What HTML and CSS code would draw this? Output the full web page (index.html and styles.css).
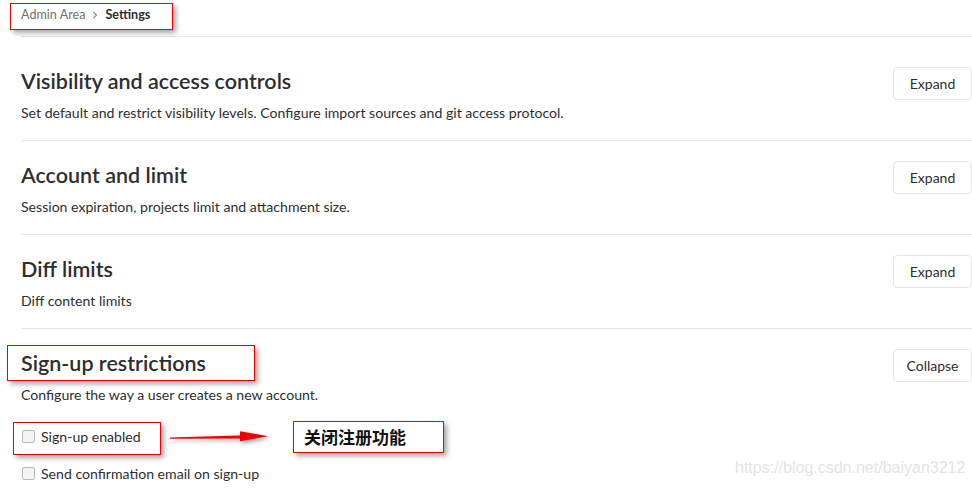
FILE: index.html
```html
<!DOCTYPE html>
<html lang="en">
<head>
    <meta charset="UTF-8">
    <title>Settings · Admin Area</title>
    <link rel="stylesheet" href="styles.css">
</head>
<body>
    <div class="page">
        <div class="breadcrumbs">
            <span class="crumb">Admin Area</span>
            <svg class="crumb-sep" width="6" height="8" viewBox="0 0 6 8">
                <path d="M1.5 1l3 3-3 3" fill="none" stroke="#8c8c8c" stroke-width="1.2"/>
            </svg>
            <span class="crumb-current">Settings</span>
        </div>

        <section class="block first">
            <div class="block-head">
                <div class="block-text">
                    <h4>Visibility and access controls</h4>
                    <p>Set default and restrict visibility levels. Configure import sources and git access protocol.</p>
                </div>
                <button class="btn">Expand</button>
            </div>
        </section>

        <section class="block">
            <div class="block-head">
                <div class="block-text">
                    <h4>Account and limit</h4>
                    <p>Session expiration, projects limit and attachment size.</p>
                </div>
                <button class="btn">Expand</button>
            </div>
        </section>

        <section class="block">
            <div class="block-head">
                <div class="block-text">
                    <h4>Diff limits</h4>
                    <p>Diff content limits</p>
                </div>
                <button class="btn">Expand</button>
            </div>
        </section>

        <section class="block last">
            <div class="block-head">
                <div class="block-text">
                    <h4>Sign-up restrictions</h4>
                    <p>Configure the way a user creates a new account.</p>
                </div>
                <button class="btn">Collapse</button>
            </div>
            <div class="checks">
                <label class="check"><input type="checkbox"> Sign-up enabled</label>
                <label class="check"><input type="checkbox"> Send confirmation email on sign-up</label>
            </div>
        </section>
    </div>

    <!-- annotations drawn over the screenshot -->
    <div class="mark mark-crumb"></div>
    <div class="mark mark-title"></div>
    <div class="mark mark-check"></div>
    <svg class="arrow" width="104" height="16" viewBox="0 0 104 16">
        <polygon points="0,8.4 70,6.6 70,2.2 98,7.2 70,12.2 70,9.6 0,9.8" fill="#ee0000"/>
    </svg>
    <div class="note">关闭注册功能</div>
    <div class="watermark">https://blog.csdn.net/baiyan3212</div>
</body>
</html>
```

FILE: styles.css
```css
body {
    margin: 0;
    font-family: Lato, "Noto Sans", sans-serif;
    color: #2e2e2e;
    background: #fff;
    overflow: hidden;
}
.page {
    padding-left: 21px;
}
.breadcrumbs {
    display: flex;
    align-items: flex-start;
    box-sizing: border-box;
    height: 37px;
    padding-top: 6px;
    border-bottom: 1px solid #e5e5e5;
    font-size: 12.6px;
    line-height: 18px;
}
.crumb {
    color: #707070;
}
.crumb-sep {
    margin: 5px 7px 0 7px;
}
.crumb-current {
    font-weight: 700;
}
.block {
    border-top: 1px solid #e5e5e5;
    padding: 20px 0 17px;
}
.breadcrumbs + .block {
    border-top: 0;
    padding-top: 30px;
}
.block.last {
    padding-bottom: 0;
}
.block-head {
    display: flex;
    justify-content: space-between;
    align-items: flex-start;
}
.block-text h4 {
    margin: 0 0 8px;
    font-size: 21.5px;
    font-weight: 600;
    line-height: 28px;
}
.block-text p {
    margin: 0;
    font-size: 14.1px;
    line-height: 20px;
}
.btn {
    width: 79px;
    height: 33px;
    padding: 0;
    background: #fff;
    border: 1px solid #e5e5e5;
    border-radius: 4px;
    font-family: inherit;
    font-size: 14px;
    color: #2e2e2e;
}
.checks {
    display: flex;
    flex-direction: column;
    gap: 17px;
    padding-top: 21px;
}
.check {
    display: flex;
    align-items: center;
    height: 20px;
    font-size: 14.1px;
}
.check input {
    appearance: none;
    width: 13px;
    height: 13px;
    margin: 0 6px 0 1px;
    border: 1px solid #b8b8b8;
    border-radius: 2px;
    background: #f4f4f4;
}
.mark {
    position: absolute;
    border: 1.5px solid #ee0000;
    box-shadow: 3px 3px 5px rgba(0, 0, 0, 0.35);
}
.mark-crumb {
    left: 10px;
    top: 3px;
    width: 161px;
    height: 25px;
}
.mark-title {
    left: 7px;
    top: 345px;
    width: 246px;
    height: 34px;
}
.mark-check {
    left: 13px;
    top: 422px;
    width: 146px;
    height: 31px;
}
.arrow {
    position: absolute;
    left: 170px;
    top: 429px;
    filter: drop-shadow(2px 2px 2px rgba(0, 0, 0, 0.4));
}
.note {
    position: absolute;
    left: 293px;
    top: 421px;
    width: 139px;
    height: 30px;
    border: 1.5px solid #ee0000;
    background: #fff;
    box-shadow: 3px 3px 5px rgba(0, 0, 0, 0.35);
    padding-left: 10px;
    font-family: "Noto Sans CJK SC", sans-serif;
    font-size: 17px;
    font-weight: 700;
    line-height: 30px;
    color: #111;
}
.watermark {
    position: absolute;
    left: 735px;
    top: 459px;
    font-family: "Liberation Sans", Arial, sans-serif;
    font-size: 16px;
    color: #e3e3e3;
}
```
